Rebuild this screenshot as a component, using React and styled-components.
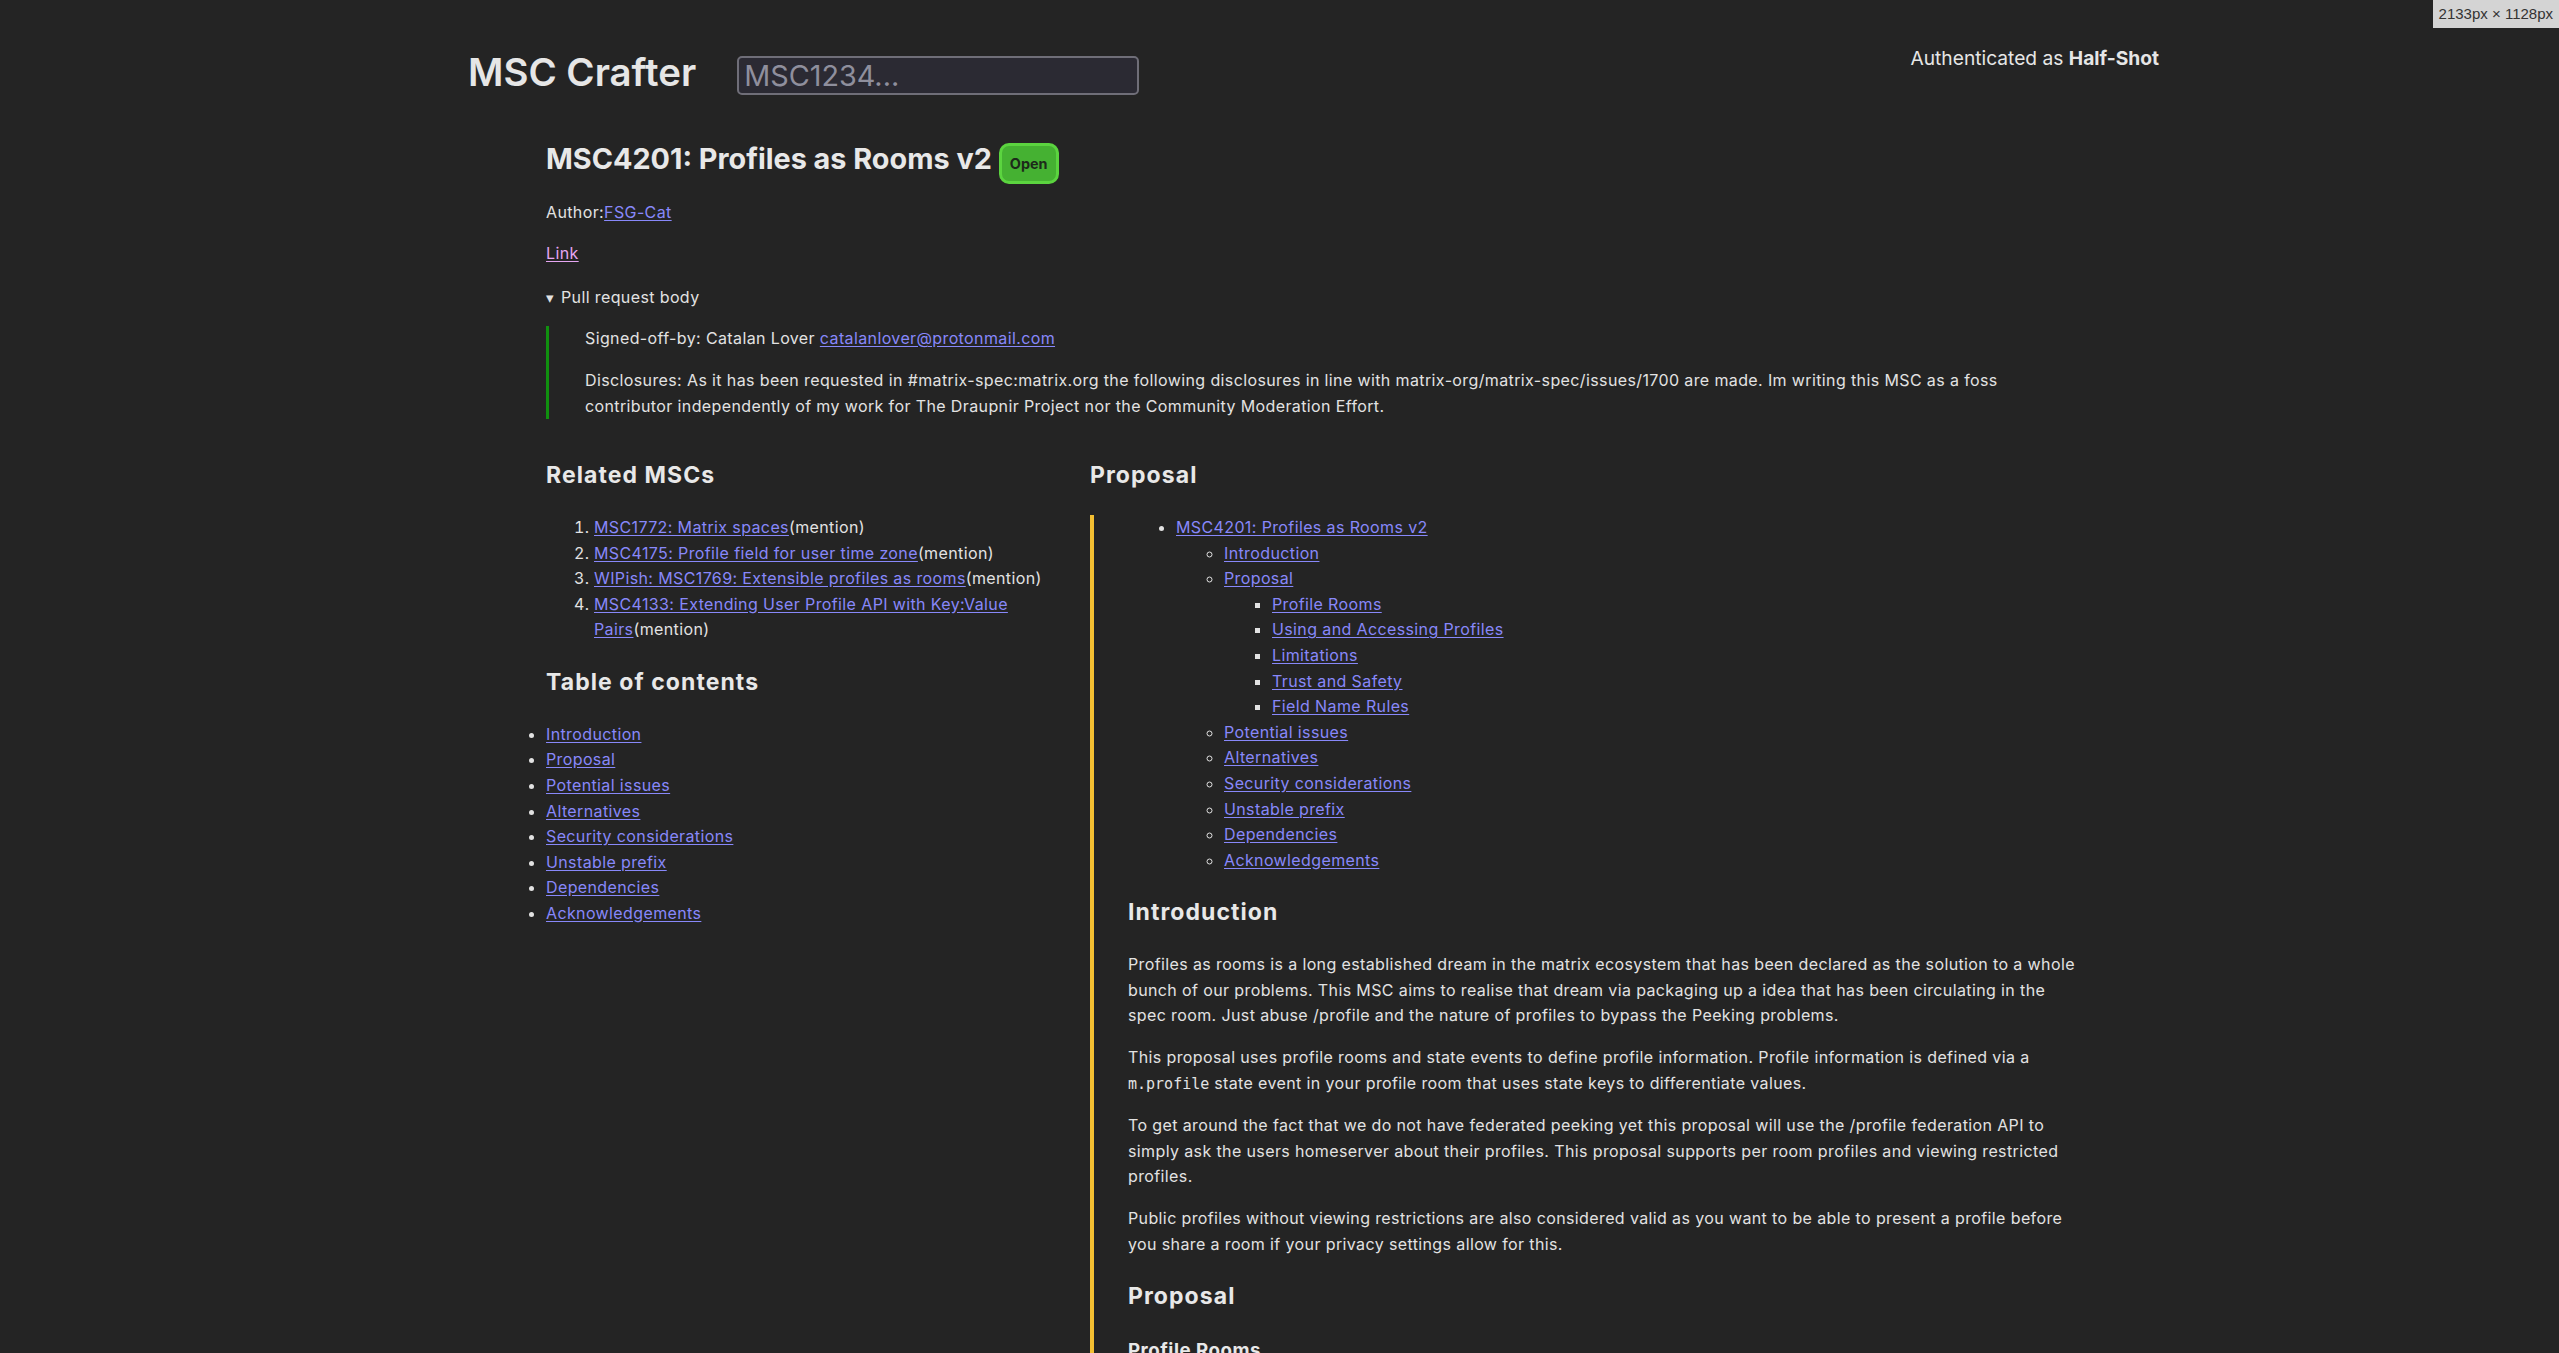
import React from 'react';
import styled, { createGlobalStyle } from 'styled-components';

const GlobalStyle = createGlobalStyle`
  html, body { margin: 0; padding: 0; background: #242424; }
  body {
    color: #e2e2e2;
    font-family: Inter, "Noto Sans", sans-serif;
    font-size: 16px;
    line-height: 25.6px;
  }
`;

const Header = styled.header`
  box-sizing: border-box;
  display: flex;
  justify-content: space-between;
  align-items: flex-start;
  width: 1691px;
  margin-left: 468px;
  padding-top: 46px;
`;

const Brand = styled.div`
  display: flex;
  align-items: flex-end;
  gap: 41px;
  margin-top: 2.7px;
`;

const SiteTitle = styled.h1`
  margin: 0;
  font-size: 38.4px;
  line-height: normal;
  font-weight: 600;
  color: #e6e6e6;
`;

const Search = styled.input`
  box-sizing: border-box;
  width: 402px;
  height: 39px;
  padding: 0 5px;
  background: #2b2a33;
  border: 2px solid #6f6e78;
  border-radius: 5px;
  color: #e2e2e2;
  font-family: Inter, sans-serif;
  font-size: 28.8px;
  outline: none;
  &::placeholder { color: #8f8f9d; }
`;

const Auth = styled.div`
  font-size: 19.2px;
  line-height: normal;
  color: #e6e6e6;
  b { font-weight: 700; }
`;

const SizeBadge = styled.div`
  position: fixed;
  top: 0;
  right: 0;
  height: 28px;
  padding: 0 6px;
  background: #d4d4d4;
  color: #333;
  font-family: "Liberation Sans", Arial, sans-serif;
  font-size: 15px;
  line-height: 28px;
`;

const Main = styled.main`
  width: 1536px;
  margin-left: 546px;
  padding-top: 46px;
  letter-spacing: 0.38px;
`;

const TitleRow = styled.div`
  display: flex;
  align-items: baseline;
  gap: 7px;
`;

const MscTitle = styled.h1`
  margin: 0;
  font-size: 28.8px;
  line-height: normal;
  font-weight: 700;
  letter-spacing: 0;
  color: #e8e8e8;
`;

const Badge = styled.span`
  display: inline-block;
  padding: 9px 8px;
  border: 3px solid #5bd43f;
  border-radius: 10px;
  background: #45b132;
  color: #1d2a1a;
  font-size: 14.4px;
  line-height: normal;
  font-weight: 700;
  letter-spacing: 0;
`;

const Para = styled.p`
  margin: 16px 0;
`;

const Link = styled.a`
  color: ${(p) => (p.$visited ? '#e6a6f2' : '#8888fa')};
  text-decoration: underline;
  text-underline-offset: 2px;
`;

const Details = styled.details`
  margin: 18px 0 16px;
`;

const Summary = styled.summary`
  display: block;
  list-style: none;
  cursor: pointer;
  &::-webkit-details-marker { display: none; }
  &::before {
    content: "▾";
    display: inline-block;
    width: 15px;
    font-family: "DejaVu Sans", sans-serif;
    font-size: 15px;
    line-height: 1;
  }
`;

const Quote = styled.blockquote`
  margin: 16px 0;
  padding-left: 36px;
  border-left: 3px solid #10900f;
`;

const Columns = styled.div`
  display: grid;
  grid-template-columns: 512px minmax(0, 1fr);
  column-gap: 32px;
  margin-top: 17px;
`;

const Column = styled.section`
  min-width: 0;
`;

const SectionHeading = styled.h2`
  margin: 21px 0;
  font-size: 23px;
  line-height: 36.8px;
  font-weight: 700;
  letter-spacing: 1.07px;
  color: #e8e8e8;
`;

const SubHeading = styled.h3`
  margin: 19px 0;
  font-size: 18.7px;
  line-height: 29.9px;
  font-weight: 700;
  letter-spacing: 0.5px;
  color: #e8e8e8;
`;

const RelatedList = styled.ol`
  margin: 16px 0;
  padding-left: 48px;
`;

const TocList = styled.ul`
  margin: ${(p) => (p.$nested ? '0' : '16px 0')};
  padding-left: ${(p) => (p.$flush ? '0' : '48px')};
`;

const Content = styled.div`
  border-left: 4px solid #f4bf32;
  padding-left: 34px;
`;

const Code = styled.code`
  font-family: "DejaVu Sans Mono", "Liberation Mono", monospace;
  font-size: 15px;
  letter-spacing: 0;
`;

const related = [
  'MSC1772: Matrix spaces',
  'MSC4175: Profile field for user time zone',
  'WIPish: MSC1769: Extensible profiles as rooms',
  'MSC4133: Extending User Profile API with Key:Value Pairs',
];

const sections = [
  'Introduction',
  'Proposal',
  'Potential issues',
  'Alternatives',
  'Security considerations',
  'Unstable prefix',
  'Dependencies',
  'Acknowledgements',
];

const proposalSubs = [
  'Profile Rooms',
  'Using and Accessing Profiles',
  'Limitations',
  'Trust and Safety',
  'Field Name Rules',
];

export default function App() {
  return (
    <>
      <GlobalStyle />
      <SizeBadge>2133px × 1128px</SizeBadge>
      <Header>
        <Brand>
          <SiteTitle>MSC Crafter</SiteTitle>
          <Search placeholder="MSC1234..." />
        </Brand>
        <Auth>
          Authenticated as <b>Half-Shot</b>
        </Auth>
      </Header>
      <Main>
        <TitleRow>
          <MscTitle>MSC4201: Profiles as Rooms v2</MscTitle>
          <Badge>Open</Badge>
        </TitleRow>
        <Para>
          Author:<Link href="#">FSG-Cat</Link>
        </Para>
        <Para>
          <Link href="#" $visited>Link</Link>
        </Para>
        <Details open>
          <Summary>Pull request body</Summary>
          <Quote>
            <Para>
              Signed-off-by: Catalan Lover <Link href="#">catalanlover@protonmail.com</Link>
            </Para>
            <Para>
              Disclosures: As it has been requested in #matrix-spec:matrix.org the following
              disclosures in line with matrix-org/matrix-spec/issues/1700 are made. Im writing this
              MSC as a foss contributor independently of my work for The Draupnir Project nor the
              Community Moderation Effort.
            </Para>
          </Quote>
        </Details>
        <Columns>
          <Column>
            <SectionHeading>Related MSCs</SectionHeading>
            <RelatedList>
              {related.map((r) => (
                <li key={r}>
                  <Link href="#">{r}</Link>(mention)
                </li>
              ))}
            </RelatedList>
            <SectionHeading>Table of contents</SectionHeading>
            <TocList $flush>
              {sections.map((s) => (
                <li key={s}>
                  <Link href="#">{s}</Link>
                </li>
              ))}
            </TocList>
          </Column>
          <Column>
            <SectionHeading>Proposal</SectionHeading>
            <Content>
              <TocList>
                <li>
                  <Link href="#">MSC4201: Profiles as Rooms v2</Link>
                  <TocList $nested>
                    {sections.map((s) => (
                      <li key={s}>
                        <Link href="#">{s}</Link>
                        {s === 'Proposal' && (
                          <TocList $nested>
                            {proposalSubs.map((p) => (
                              <li key={p}>
                                <Link href="#">{p}</Link>
                              </li>
                            ))}
                          </TocList>
                        )}
                      </li>
                    ))}
                  </TocList>
                </li>
              </TocList>
              <SectionHeading>Introduction</SectionHeading>
              <Para>
                Profiles as rooms is a long established dream in the matrix ecosystem that has been
                declared as the solution to a whole bunch of our problems. This MSC aims to realise
                that dream via packaging up a idea that has been circulating in the spec room. Just
                abuse /profile and the nature of profiles to bypass the Peeking problems.
              </Para>
              <Para>
                This proposal uses profile rooms and state events to define profile information.
                Profile information is defined via a <Code>m.profile</Code> state event in your
                profile room that uses state keys to differentiate values.
              </Para>
              <Para>
                To get around the fact that we do not have federated peeking yet this proposal will
                use the /profile federation API to simply ask the users homeserver about their
                profiles. This proposal supports per room profiles and viewing restricted profiles.
              </Para>
              <Para>
                Public profiles without viewing restrictions are also considered valid as you want to
                be able to present a profile before you share a room if your privacy settings allow
                for this.
              </Para>
              <SectionHeading>Proposal</SectionHeading>
              <SubHeading>Profile Rooms</SubHeading>
              <Para>
                Each user has a profile room that holds the state events describing their profile.
              </Para>
            </Content>
          </Column>
        </Columns>
      </Main>
    </>
  );
}
